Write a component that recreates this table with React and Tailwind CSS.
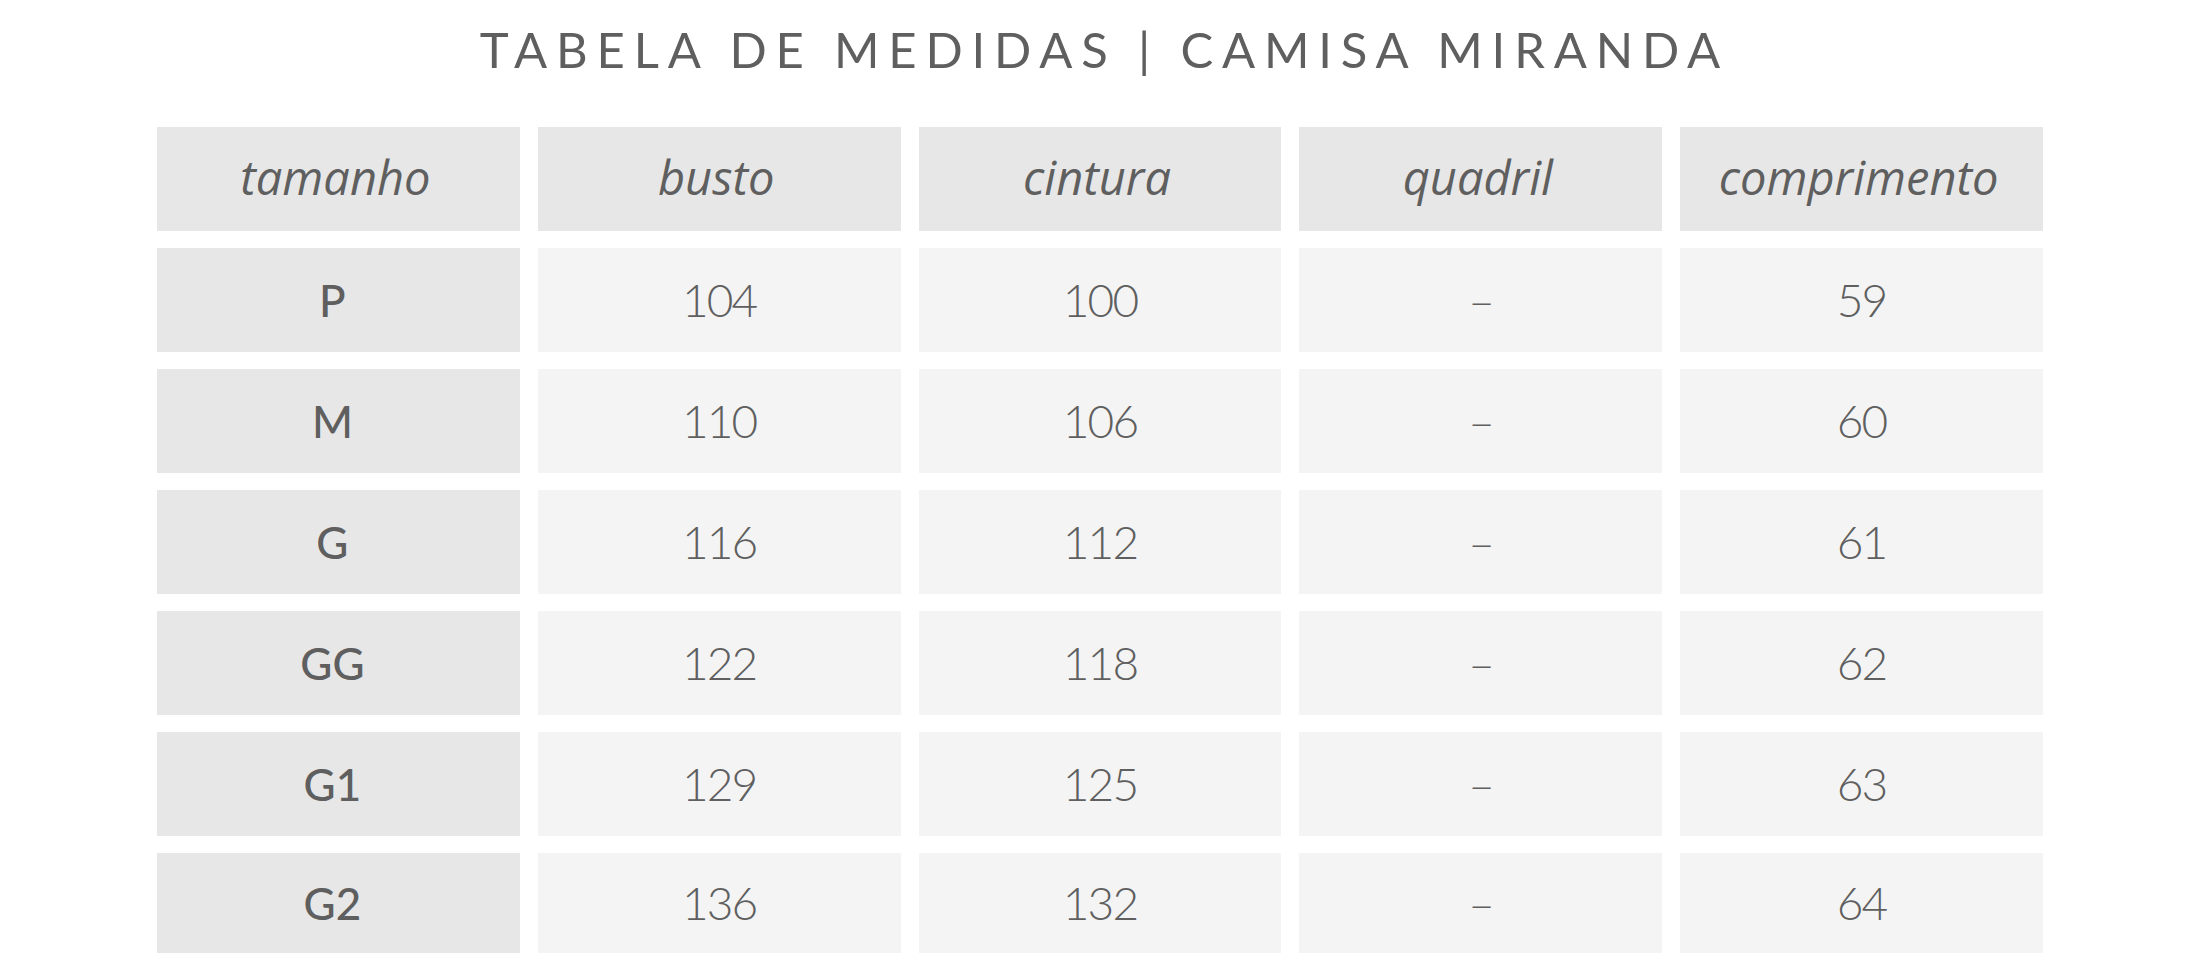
import React from 'react';

const headers = ['tamanho', 'busto', 'cintura', 'quadril', 'comprimento'];

const rows = [
  ['P', '104', '100', '–', '59'],
  ['M', '110', '106', '–', '60'],
  ['G', '116', '112', '–', '61'],
  ['GG', '122', '118', '–', '62'],
  ['G1', '129', '125', '–', '63'],
  ['G2', '136', '132', '–', '64'],
];

export default function App() {
  return (
    <div className="w-[2200px] h-[979px] bg-white overflow-hidden text-[#5f5f5f]">
      {/* Title */}
      <div className="h-[127px] pt-[19px] flex justify-center">
        <h1 className="font-['Lato',sans-serif] font-normal text-[49px] leading-[60px] tracking-[0.18em] whitespace-nowrap pl-[0.18em]">
          TABELA DE MEDIDAS | CAMISA MIRANDA
        </h1>
      </div>

      {/* Table */}
      <div className="mx-auto w-[1886px] grid grid-cols-5 gap-x-[18px] gap-y-[17px]">
        {headers.map((h) => (
          <div
            key={h}
            className="h-[104px] bg-[#e7e7e7] flex items-center justify-center font-['Open_Sans',sans-serif] italic text-[47px] leading-none pb-[4px] pr-[6px]"
          >
            {h}
          </div>
        ))}

        {rows.map((r, ri) => {
          const last = ri === rows.length - 1;
          return r.map((v, ci) => (
            <div
              key={ri + '-' + ci}
              className={`${last ? 'h-[100px]' : 'h-[104px]'} flex items-center justify-center font-['Lato',sans-serif] leading-none ${
                ci === 0
                  ? 'bg-[#e7e7e7] text-[44px] font-medium pr-[12px]'
                  : 'bg-[#f4f4f4] text-[46px] font-light tracking-[-0.04em]'
              }`}
            >
              {v}
            </div>
          ));
        })}
      </div>
    </div>
  );
}
